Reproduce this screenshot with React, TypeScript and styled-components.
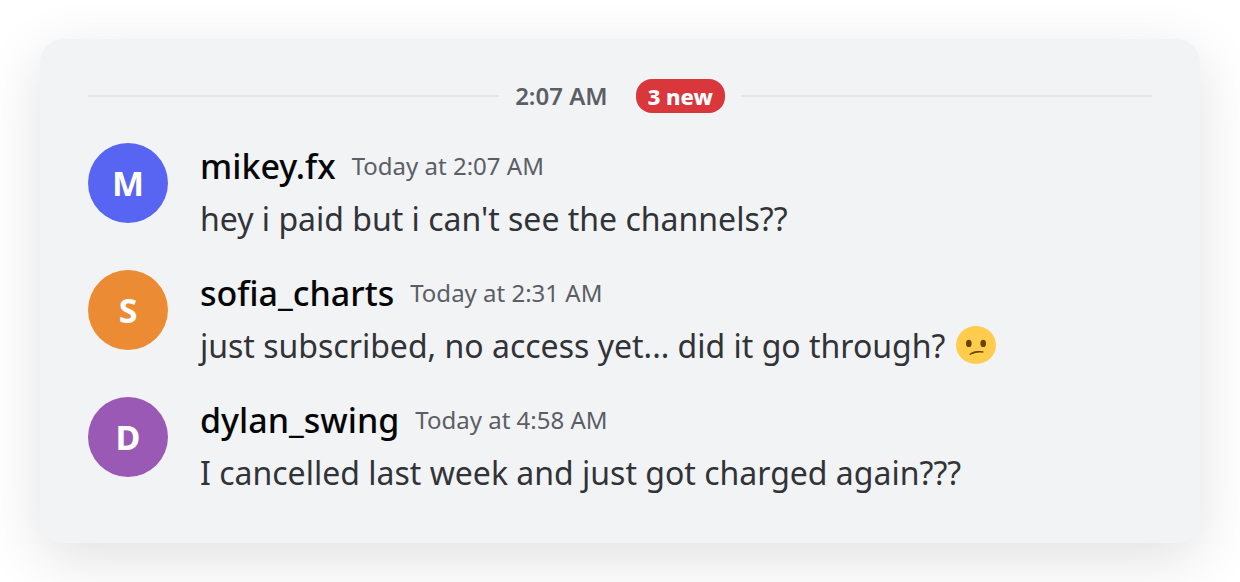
import React from "react";
import styled, { createGlobalStyle } from "styled-components";

const GlobalStyle = createGlobalStyle`
  *, *::before, *::after { box-sizing: border-box; }
  body {
    margin: 0;
    background: #ffffff;
    font-family: "Noto Sans", sans-serif;
  }
`;

const Page = styled.main`
  padding: 39px 40px;
  overflow: hidden;
`;

const Card = styled.section`
  padding: 40px 48px 46px;
  border-radius: 24px;
  background: #f1f3f5;
  box-shadow: 0 16px 60px rgba(0, 0, 0, 0.12);
`;

const Divider = styled.div`
  display: flex;
  align-items: center;
  gap: 16px;
  height: 34px;
  margin-bottom: 30px;

  &::before,
  &::after {
    content: "";
    flex: 1;
    height: 2px;
    background: #e3e5e8;
  }
`;

const DividerLabel = styled.div`
  display: flex;
  align-items: center;
  gap: 28px;
  color: #5c5e66;
  font-size: 24px;
  line-height: 34px;
  font-weight: 600;
`;

const NewBadge = styled.span`
  padding: 0 12px;
  border-radius: 16px;
  background: #da373c;
  color: #ffffff;
  font-size: 22px;
  line-height: 34px;
  font-weight: 800;
`;

const MessageList = styled.ul`
  display: flex;
  flex-direction: column;
  gap: 27px;
  margin: 0;
  padding: 0;
  list-style: none;
`;

const Message = styled.li`
  display: flex;
  align-items: flex-start;
  gap: 32px;
`;

const Avatar = styled.div<{ $color: string }>`
  display: flex;
  align-items: center;
  justify-content: center;
  flex: none;
  width: 80px;
  height: 80px;
  border-radius: 50%;
  background: ${({ $color }) => $color};
  color: #ffffff;
  font-size: 34px;
  font-weight: 700;
`;

const Content = styled.div`
  flex: 1;
  min-width: 0;
`;

const Header = styled.div`
  display: flex;
  align-items: center;
  gap: 16px;
  line-height: 46px;
`;

const Author = styled.span`
  color: #060607;
  font-size: 34px;
  font-weight: 500;
`;

const Timestamp = styled.time`
  color: #5c5e66;
  font-size: 24px;
`;

const Text = styled.p`
  margin: 6px 0 0;
  color: #313338;
  font-size: 32px;
  line-height: 48px;
`;

const Face = styled.svg`
  width: 40px;
  height: 38px;
  margin-left: 11px;
  vertical-align: -6px;
`;

const ConfusedFace = () => (
  <Face viewBox="0 0 40 38" role="img" aria-label="Confused face">
    <ellipse cx="20" cy="19" rx="20" ry="19" fill="#ffcc4d" />
    <ellipse cx="12.8" cy="17.4" rx="2.8" ry="3.7" fill="#664500" />
    <ellipse cx="27.2" cy="17.4" rx="2.8" ry="3.7" fill="#664500" />
    <path d="M13.5 28.4C14.5 26.3 18.5 25 22 25C24.5 25 28 25.2 27.8 26.1C27.6 27 25 26.4 22 26.7C18.5 27 16 28 14.4 29C13.8 29.3 13.3 29 13.5 28.4Z" fill="#664500" />
  </Face>
);

const messages = [
  { author: "mikey.fx", initial: "M", color: "#5865f2", time: "2:07 AM", text: "hey i paid but i can't see the channels??", confused: false },
  { author: "sofia_charts", initial: "S", color: "#eb8c34", time: "2:31 AM", text: "just subscribed, no access yet... did it go through?", confused: true },
  { author: "dylan_swing", initial: "D", color: "#9b59b6", time: "4:58 AM", text: "I cancelled last week and just got charged again???", confused: false },
];

export default function App() {
  return (
    <>
      <GlobalStyle />
      <Page>
        <Card>
          <Divider>
            <DividerLabel>
              <time>2:07 AM</time>
              <NewBadge>3 new</NewBadge>
            </DividerLabel>
          </Divider>
          <MessageList>
            {messages.map((m) => (
              <Message key={m.author}>
                <Avatar $color={m.color} aria-hidden="true">{m.initial}</Avatar>
                <Content>
                  <Header>
                    <Author>{m.author}</Author>
                    <Timestamp>Today at {m.time}</Timestamp>
                  </Header>
                  <Text>
                    {m.text}
                    {m.confused && <ConfusedFace />}
                  </Text>
                </Content>
              </Message>
            ))}
          </MessageList>
        </Card>
      </Page>
    </>
  );
}
